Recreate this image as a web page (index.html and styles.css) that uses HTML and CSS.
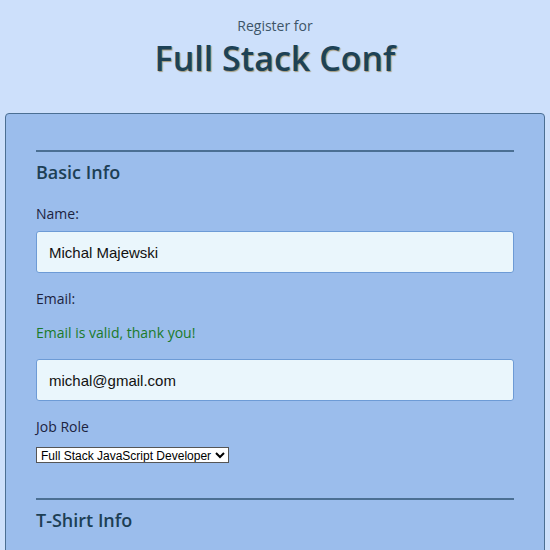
FILE: index.html
```html
<!DOCTYPE html>
<html lang="en">
<head>
<meta charset="utf-8">
<title>Full Stack Conf</title>
<link rel="stylesheet" href="styles.css">
</head>
<body>
<header class="header">
  <span class="pre">Register for</span>
  <h1 class="title">Full Stack Conf</h1>
</header>
<form class="card">
  <section class="section">
    <h2 class="legend">Basic Info</h2>
    <label class="label">Name:</label>
    <input class="input" type="text" value="Michal Majewski">
    <label class="label">Email:</label>
    <p class="valid">Email is valid, thank you!</p>
    <input class="input" type="email" value="michal@gmail.com">
    <label class="label">Job Role</label>
    <select class="select"><option>Full Stack JavaScript Developer</option></select>
  </section>
  <section class="section">
    <h2 class="legend">T-Shirt Info</h2>
  </section>
</form>
</body>
</html>
```
FILE: styles.css
```css
html, body { margin: 0; padding: 0; }
body {
  background: #cde0fb;
  font-family: "Open Sans", "Noto Sans", sans-serif;
  color: #1f3a4f;
  height: 550px;
  overflow: hidden;
}
.header {
  display: flex;
  flex-direction: column;
  align-items: center;
  padding-top: 17px;
  height: 113px;
  box-sizing: border-box;
}
.pre {
  font-size: 14px;
  color: #3d5568;
  line-height: 18px;
}
.title {
  margin: 2px 0 0;
  font-size: 34px;
  font-weight: 600;
  line-height: 42px;
  color: #1d4256;
  text-shadow: 1px 1px 1px #a59a7a;
}
.card {
  margin: 0 5px;
  background: #9bbdec;
  border: 1px solid #4b6f93;
  border-radius: 4px;
  padding: 36px 30px 40px;
  min-height: 600px;
}
.section {
  border-top: 2px solid #4b6f93;
  display: flex;
  flex-direction: column;
  align-items: flex-start;
  padding-bottom: 35px;
}
.legend {
  margin: 8px 0 0;
  font-size: 18px;
  font-weight: 600;
  line-height: 24px;
  color: #1d3f55;
}
.label {
  margin-top: 20px;
  font-size: 14px;
  line-height: 20px;
  color: #1c2340;
}
.input + .label { margin-top: 16px; }
.valid {
  margin: 14px 0 0;
  font-size: 14px;
  line-height: 20px;
  color: #1a7a2a;
}
.input {
  margin-top: 7px;
  box-sizing: border-box;
  width: 100%;
  height: 42px;
  padding: 0 12px;
  background: #eaf6fc;
  border: 1px solid #6d9bd6;
  border-radius: 3px;
  font-family: "Liberation Sans", Arial, sans-serif;
  font-size: 15px;
  color: #111;
}
.valid + .input { margin-top: 16px; }
.select {
  margin-top: 10px;
  font-family: "Liberation Sans", Arial, sans-serif;
  font-size: 12px;
  height: 16px;
  padding: 0;
  border: 1px solid #555;
  border-radius: 0;
  background: #fff;
  color: #000;
}
```
